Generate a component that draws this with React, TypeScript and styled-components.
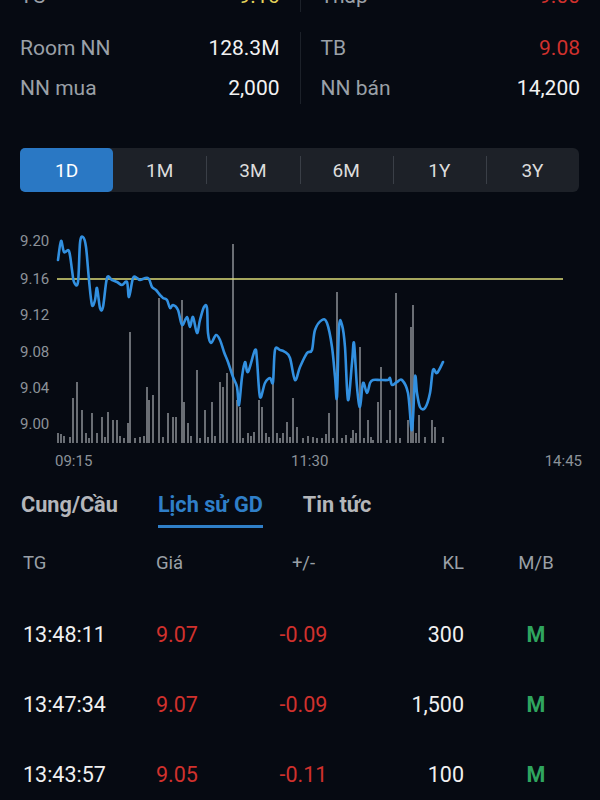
import React from "react";
import styled, { createGlobalStyle } from "styled-components";

const GlobalStyle = createGlobalStyle`
  body {
    margin: 0;
    background: #060a12;
  }
`;

type Stat = { label: string; value: string; color?: string };

const statGroups: { left: Stat[]; right: Stat[]; top: number }[] = [
  {
    top: -24,
    left: [{ label: "TC", value: "9.16", color: "#e3d35a" }],
    right: [{ label: "Thấp", value: "9.00", color: "#d0312d" }],
  },
  {
    top: 12,
    left: [
      { label: "Room NN", value: "128.3M" },
      { label: "NN mua", value: "2,000" },
    ],
    right: [
      { label: "TB", value: "9.08", color: "#d0312d" },
      { label: "NN bán", value: "14,200" },
    ],
  },
];

const periods = ["1D", "1M", "3M", "6M", "1Y", "3Y"];

const trades = [
  { time: "13:48:11", price: "9.07", change: "-0.09", vol: "300", side: "M" },
  { time: "13:47:34", price: "9.07", change: "-0.09", vol: "1,500", side: "M" },
  { time: "13:43:57", price: "9.05", change: "-0.11", vol: "100", side: "M" },
];

// price line, page coordinates
const linePts: [number, number][] = [
  [58, 260], [61, 241], [64, 252], [69, 251], [72, 270], [74, 282], [78, 282],
  [80, 243], [83, 237], [86, 247], [89, 280], [92, 305], [95, 300], [97, 288],
  [100, 308], [103, 307], [107, 278], [112, 280], [117, 282], [122, 285],
  [127, 282], [129, 297], [133, 278], [137, 278], [140, 280], [148, 278],
  [152, 287], [156, 290], [160, 295], [163, 298], [167, 300], [170, 308],
  [173, 305], [178, 310], [182, 325], [187, 317], [190, 327], [193, 317],
  [197, 333], [200, 320], [204, 307], [207, 308], [208, 333], [211, 343],
  [216, 335], [220, 340], [224, 352], [228, 362], [233, 377], [237, 387],
  [239, 405], [242, 377], [245, 362], [248, 372], [255, 350], [257, 360],
  [260, 397], [265, 383], [270, 378], [273, 382], [275, 350], [280, 350],
  [285, 352], [290, 358], [295, 380], [300, 367], [307, 353], [312, 350],
  [315, 330], [322, 320], [327, 323], [332, 347], [335, 377], [337, 397],
  [339, 327], [342, 325], [345, 347], [348, 400], [352, 363], [354, 343],
  [357, 387], [360, 407], [363, 383], [367, 393], [370, 383], [373, 380],
  [380, 380], [388, 380], [390, 378], [392, 385], [397, 382], [402, 380],
  [408, 393], [412, 430], [415, 377], [417, 393], [420, 407], [425, 408],
  [430, 393], [433, 370], [437, 373], [443, 362],
];

// volume bars: [x, top], base at y=443
const bars: [number, number][] = [
  [58, 433], [61, 434], [64, 436], [70, 437], [73, 398], [77, 382], [82, 410],
  [86, 433], [89, 438], [92, 413], [97, 433], [102, 417], [105, 437], [108, 412],
  [113, 420], [117, 420], [120, 436], [124, 438], [128, 423], [130, 332],
  [135, 438], [140, 437], [144, 436], [147, 387], [149, 400], [153, 395],
  [159, 298], [163, 437], [168, 413], [173, 417], [176, 417], [182, 300],
  [184, 402], [188, 423], [191, 436], [197, 370], [200, 438], [205, 410],
  [208, 437], [212, 402], [215, 436], [220, 382], [223, 387], [227, 373],
  [233, 244], [237, 400], [240, 407], [243, 438], [248, 433], [251, 436],
  [254, 432], [259, 400], [262, 407], [266, 433], [269, 437], [273, 383],
  [277, 433], [280, 438], [283, 433], [287, 422], [290, 437], [293, 398],
  [297, 427], [303, 438], [308, 436], [313, 437], [317, 438], [322, 438],
  [326, 434], [329, 413], [333, 438], [337, 292], [342, 438], [346, 435],
  [351, 438], [353, 430], [356, 433], [360, 347], [364, 438], [368, 420],
  [371, 437], [373, 440], [378, 402], [381, 367], [387, 440], [390, 410],
  [396, 293], [400, 438], [408, 420], [411, 327], [413, 305], [416, 433],
  [419, 415], [425, 437], [432, 420], [435, 427], [443, 437],
];

const yTicks = [
  { label: "9.20", y: 241 },
  { label: "9.16", y: 279 },
  { label: "9.12", y: 315 },
  { label: "9.08", y: 352 },
  { label: "9.04", y: 388 },
  { label: "9.00", y: 424 },
];

// catmull-rom -> cubic bezier, keeps the line soft like the app
function smoothPath(pts: [number, number][]) {
  let d = `M${pts[0][0]},${pts[0][1]}`;
  for (let i = 0; i < pts.length - 1; i++) {
    const p0 = pts[i - 1] || pts[i];
    const p1 = pts[i];
    const p2 = pts[i + 1];
    const p3 = pts[i + 2] || p2;
    const c1x = p1[0] + (p2[0] - p0[0]) / 6;
    const c1y = p1[1] + (p2[1] - p0[1]) / 6;
    const c2x = p2[0] - (p3[0] - p1[0]) / 6;
    const c2y = p2[1] - (p3[1] - p1[1]) / 6;
    d += ` C${c1x.toFixed(1)},${c1y.toFixed(1)} ${c2x.toFixed(1)},${c2y.toFixed(1)} ${p2[0]},${p2[1]}`;
  }
  return d;
}

export default function App() {
  return (
    <Page>
      <GlobalStyle />

      {statGroups.map((g, gi) => (
        <StatsBlock key={gi} $top={g.top}>
          <Half $side="left">
            {g.left.map((s) => (
              <StatRow key={s.label}>
                <StatLabel>{s.label}</StatLabel>
                <StatValue $color={s.color}>{s.value}</StatValue>
              </StatRow>
            ))}
          </Half>
          <Divider />
          <Half $side="right">
            {g.right.map((s) => (
              <StatRow key={s.label}>
                <StatLabel>{s.label}</StatLabel>
                <StatValue $color={s.color}>{s.value}</StatValue>
              </StatRow>
            ))}
          </Half>
        </StatsBlock>
      ))}

      <PeriodBar>
        {periods.map((p, i) => (
          <Period key={p} $active={i === 0} $sep={i > 1}>
            {p}
          </Period>
        ))}
      </PeriodBar>

      <Chart width={600} height={260} viewBox="0 220 600 260">
        {yTicks.map((t) => (
          <AxisText key={t.label} x={20} y={t.y + 5}>
            {t.label}
          </AxisText>
        ))}
        {bars.map(([x, top], i) => (
          <rect key={i} x={x - 1} y={top} width={2} height={443 - top} fill="#6a6e74" />
        ))}
        <line x1={57} y1={279} x2={563} y2={279} stroke="#dcdc78" strokeWidth={1.6} />
        <path
          d={smoothPath(linePts)}
          fill="none"
          stroke="#3290e0"
          strokeWidth={2.6}
          strokeLinejoin="round"
          strokeLinecap="round"
        />
        <AxisText x={55} y={466}>09:15</AxisText>
        <AxisText x={291} y={466}>11:30</AxisText>
        <AxisText x={582} y={466} textAnchor="end">14:45</AxisText>
      </Chart>

      <SubTabs>
        <SubTab>Cung/Cầu</SubTab>
        <SubTab $active>Lịch sử GD</SubTab>
        <SubTab>Tin tức</SubTab>
      </SubTabs>

      <Table>
        <HeadRow>
          <Cell>TG</Cell>
          <Cell>Giá</Cell>
          <Cell $align="center">+/-</Cell>
          <Cell $align="right">KL</Cell>
          <SideCell>M/B</SideCell>
        </HeadRow>
        {trades.map((t) => (
          <TradeRow key={t.time}>
            <Cell>{t.time}</Cell>
            <Cell $color="#d0312d">{t.price}</Cell>
            <Cell $align="center" $color="#d0312d">{t.change}</Cell>
            <Cell $align="right">{t.vol}</Cell>
            <SideCell $buy>{t.side}</SideCell>
          </TradeRow>
        ))}
      </Table>
    </Page>
  );
}

const Page = styled.div`
  width: 600px;
  height: 800px;
  overflow: hidden;
  background: #060a12;
  font-family: Roboto, "Noto Sans", sans-serif;
  color: #f0f0f0;
`;

const StatsBlock = styled.div<{ $top: number }>`
  display: grid;
  grid-template-columns: 1fr 1px 1fr;
  padding: 0 20px 0 20px;
  margin-top: ${(p) => p.$top}px;
`;

const Half = styled.div<{ $side: "left" | "right" }>`
  display: flex;
  flex-direction: column;
  padding-right: ${(p) => (p.$side === "left" ? "20px" : "0")};
  padding-left: ${(p) => (p.$side === "right" ? "20px" : "0")};
`;

const Divider = styled.div`
  background: #1c2129;
  margin: 4px 0;
`;

const StatRow = styled.div`
  display: flex;
  justify-content: space-between;
  align-items: center;
  height: 40px;
  font-size: 21px;
`;

const StatLabel = styled.span`
  color: #9aa0a7;
`;

const StatValue = styled.span<{ $color?: string }>`
  color: ${(p) => p.$color || "#f2f2f2"};
`;

const PeriodBar = styled.div`
  display: flex;
  height: 44px;
  margin: 40px 21px 0 20px;
  background: #1d2128;
  border-radius: 6px;
`;

const Period = styled.div<{ $active?: boolean; $sep?: boolean }>`
  flex: 1;
  position: relative;
  display: flex;
  align-items: center;
  justify-content: center;
  font-size: 19px;
  color: ${(p) => (p.$active ? "#ffffff" : "#dcdcdc")};
  background: ${(p) => (p.$active ? "#2a78c4" : "transparent")};
  border-radius: 5px;

  &::before {
    content: "";
    display: ${(p) => (p.$sep ? "block" : "none")};
    position: absolute;
    left: 0;
    top: 8px;
    bottom: 8px;
    width: 1px;
    background: #3a3f47;
  }
`;

const Chart = styled.svg`
  display: block;
  margin-top: 28px;
`;

const AxisText = styled.text`
  font-family: Roboto, "Noto Sans", sans-serif;
  font-size: 15px;
  fill: #8c9299;
`;

const SubTabs = styled.div`
  display: flex;
  gap: 40px;
  padding-left: 21px;
  margin-top: 13px;
`;

const SubTab = styled.div<{ $active?: boolean }>`
  font-size: 21.7px;
  font-weight: 700;
  line-height: 24px;
  padding-bottom: 8px;
  color: ${(p) => (p.$active ? "#2f7fc8" : "#b4b6ba")};
  border-bottom: 3px solid ${(p) => (p.$active ? "#2f7fc8" : "transparent")};
`;

const Table = styled.div`
  margin-top: 15px;
`;

const rowGrid = `
  display: grid;
  grid-template-columns: 133px 100px 95px 113px 1fr;
  align-items: center;
  padding-left: 23px;
`;

const HeadRow = styled.div`
  ${rowGrid}
  height: 40px;
  margin-bottom: 16px;
  font-size: 18.5px;
  color: #9aa0a7;
`;

const TradeRow = styled.div`
  ${rowGrid}
  height: 70px;
  font-size: 21.5px;
  color: #f0f0f0;
`;

const Cell = styled.div<{ $align?: "left" | "center" | "right"; $color?: string }>`
  text-align: ${(p) => p.$align || "left"};
  ${(p) => (p.$color ? `color: ${p.$color};` : "")}
`;

const SideCell = styled.div<{ $buy?: boolean }>`
  text-align: center;
  padding-left: 8px;
  ${(p) => (p.$buy ? "color: #2fa55f; font-weight: 700;" : "")}
`;
